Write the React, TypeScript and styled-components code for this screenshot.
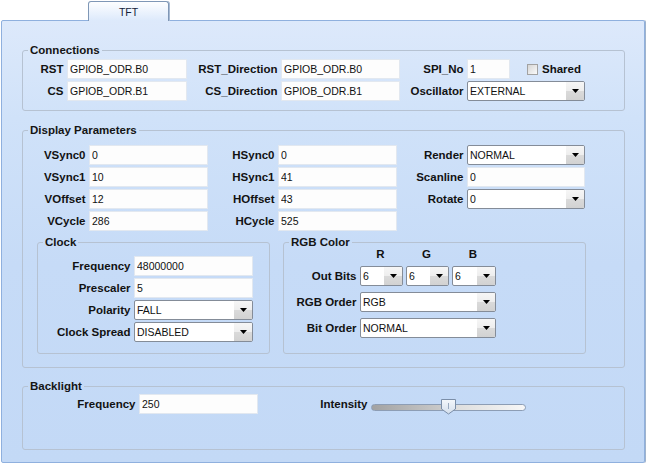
import React from 'react';
import styled, { createGlobalStyle } from 'styled-components';

const GlobalStyle = createGlobalStyle`
  html, body {
    margin: 0;
    padding: 0;
    background: #ffffff;
  }
  body {
    font-family: "Liberation Sans", Arial, sans-serif;
    font-size: 11px;
    color: #111;
  }
  * {
    box-sizing: border-box;
  }
`;

const Window = styled.div`
  width: 646px;
  height: 464px;
  padding-top: 1px;
  overflow: hidden;
`;

const TabStrip = styled.div`
  display: flex;
  height: 20px;
  padding-left: 88px;
`;

const Tab = styled.div`
  position: relative;
  z-index: 1;
  width: 81px;
  height: 20px;
  border: 1px solid #7f97b6;
  border-bottom: none;
  border-radius: 3px 3px 0 0;
  background: linear-gradient(#fdfeff, #dce9fb);
  box-shadow: 1px 0 0 #a9bbd3;
  display: flex;
  align-items: center;
  justify-content: center;
  font-size: 10.5px;
  color: #14213a;
`;

const Panel = styled.div`
  margin: -1px 0 0 1px;
  width: 644px;
  height: 443px;
  border: 1px solid #8fb0de;
  border-radius: 2px;
  box-shadow: 1px 0 0 #9fb3cc;
  background: linear-gradient(180deg, #dde9fb 0%, #d0e2f9 22%, #c6dbf7 55%, #c3d9f6 100%);
  padding: 23px 19px 0 20px;
`;

const Group = styled.fieldset<{ $top?: number; $width?: number }>`
  margin: ${p => p.$top || 0}px 0 0 0;
  padding: 0;
  min-width: 0;
  width: ${p => (p.$width ? `${p.$width}px` : 'auto')};
  border: 1px solid #b6c2d2;
  border-radius: 3px;
`;

const Legend = styled.legend`
  margin-left: 5px;
  padding: 0 2px;
  font-weight: bold;
  font-size: 11.5px;
  line-height: 13px;
  color: #151515;
`;

const FieldGrid = styled.div<{ $cols: string; $pad: string }>`
  display: grid;
  grid-template-columns: ${p => p.$cols};
  grid-auto-rows: 20px;
  row-gap: 2px;
  padding: ${p => p.$pad};
`;

const Label = styled.label`
  display: flex;
  align-items: center;
  justify-content: flex-end;
  padding-right: 3.5px;
  font-weight: bold;
  font-size: 11.5px;
  color: #121212;
  white-space: nowrap;
`;

const TextBox = styled.input`
  width: 100%;
  height: 20px;
  margin: 0;
  padding: 0 2px;
  background: #fdfdfd;
  border: 1px solid #e2e8f0;
  font-family: inherit;
  font-size: 10.5px;
  color: #111;
  outline: none;
`;

const SelectBox = styled.div<{ $span?: number }>`
  grid-column: span ${p => p.$span || 1};
  display: flex;
  align-items: stretch;
  height: 20px;
  border: 1px solid #848c98;
  border-radius: 2px;
  background: #ffffff;
  overflow: hidden;
`;

const SelectValue = styled.span`
  flex: 1;
  display: flex;
  align-items: center;
  padding-left: 2px;
  font-size: 10.5px;
  color: #111;
  white-space: nowrap;
`;

const SelectButton = styled.span`
  width: 18px;
  display: flex;
  align-items: center;
  justify-content: center;
  background: linear-gradient(#f6f6f6 0%, #eeeeee 48%, #dadada 52%, #d2d2d2 100%);
`;

const CheckCell = styled.div`
  display: flex;
  align-items: center;
  gap: 4px;
  padding-left: 17px;
  font-weight: bold;
  font-size: 11.5px;
`;

const CheckBox = styled.span`
  width: 11px;
  height: 11px;
  border: 1px solid #a2a2a2;
  background: linear-gradient(135deg, #d6d6d6, #fafafa);
`;

const SubRow = styled.div`
  display: flex;
  gap: 13px;
  padding: 5px 0 13px 14px;
`;

const RgbGrid = styled.div`
  display: grid;
  grid-template-columns: 76px 136px;
  grid-template-rows: 11px 20px 20px 20px;
  row-gap: 6px;
`;

const ChannelRow = styled.div`
  display: flex;
  gap: 3px;
`;

const ChannelHead = styled.span<{ $w: number }>`
  width: ${p => p.$w}px;
  text-align: center;
  padding-right: 2px;
  font-weight: bold;
  font-size: 11.5px;
  line-height: 11px;
`;

const ChannelSelect = styled(SelectBox)<{ $w: number }>`
  width: ${p => p.$w}px;
`;

const Track = styled.div`
  position: relative;
  align-self: start;
  margin-top: 10px;
  height: 7px;
  border: 1px solid #8d9db4;
  border-radius: 4px;
  background: linear-gradient(90deg, #a2a2a2 0%, #bcbcbc 30%, #c9c9c9 45%, #dedede 55%, #ebebeb 80%, #f7f7f7 100%);
`;

const Thumb = styled.svg`
  position: absolute;
  left: 69px;
  top: -6px;
`;

const Arrow = () => (
  <svg width="7" height="4" viewBox="0 0 7 4">
    <polygon points="0,0 7,0 3.5,4" fill="#000" />
  </svg>
);

const Select: React.FC<{ value: string; span?: number }> = ({ value, span }) => (
  <SelectBox $span={span}>
    <SelectValue>{value}</SelectValue>
    <SelectButton>
      <Arrow />
    </SelectButton>
  </SelectBox>
);

const channels = [
  { name: 'R', w: 43 },
  { name: 'G', w: 43 },
  { name: 'B', w: 44 },
];

export default function App() {
  return (
    <Window>
      <GlobalStyle />
      <TabStrip>
        <Tab>TFT</Tab>
      </TabStrip>
      <Panel>
        <Group>
          <Legend>Connections</Legend>
          <FieldGrid $cols="44px 120px 94px 119px 67px 43px 75px" $pad="2px 0 9px">
            <Label>RST</Label>
            <TextBox readOnly value="GPIOB_ODR.B0" />
            <Label>RST_Direction</Label>
            <TextBox readOnly value="GPIOB_ODR.B0" />
            <Label>SPI_No</Label>
            <TextBox readOnly value="1" />
            <CheckCell>
              <CheckBox />
              Shared
            </CheckCell>
            <Label>CS</Label>
            <TextBox readOnly value="GPIOB_ODR.B1" />
            <Label>CS_Direction</Label>
            <TextBox readOnly value="GPIOB_ODR.B1" />
            <Label>Oscillator</Label>
            <Select value="EXTERNAL" span={2} />
          </FieldGrid>
        </Group>

        <Group $top={13}>
          <Legend>Display Parameters</Legend>
          <FieldGrid $cols="66px 119px 70px 119px 70px 118px" $pad="8px 0 0">
            <Label>VSync0</Label>
            <TextBox readOnly value="0" />
            <Label>HSync0</Label>
            <TextBox readOnly value="0" />
            <Label>Render</Label>
            <Select value="NORMAL" />
            <Label>VSync1</Label>
            <TextBox readOnly value="10" />
            <Label>HSync1</Label>
            <TextBox readOnly value="41" />
            <Label>Scanline</Label>
            <TextBox readOnly value="0" />
            <Label>VOffset</Label>
            <TextBox readOnly value="12" />
            <Label>HOffset</Label>
            <TextBox readOnly value="43" />
            <Label>Rotate</Label>
            <Select value="0" />
            <Label>VCycle</Label>
            <TextBox readOnly value="286" />
            <Label>HCycle</Label>
            <TextBox readOnly value="525" />
          </FieldGrid>
          <SubRow>
            <Group $width={233}>
              <Legend>Clock</Legend>
              <FieldGrid $cols="96px 119px" $pad="7px 0 11px">
                <Label>Frequency</Label>
                <TextBox readOnly value="48000000" />
                <Label>Prescaler</Label>
                <TextBox readOnly value="5" />
                <Label>Polarity</Label>
                <Select value="FALL" />
                <Label>Clock Spread</Label>
                <Select value="DISABLED" />
              </FieldGrid>
            </Group>
            <Group $width={303}>
              <Legend>RGB Color</Legend>
              <RgbGrid>
                <span />
                <ChannelRow>
                  {channels.map(c => (
                    <ChannelHead key={c.name} $w={c.w}>
                      {c.name}
                    </ChannelHead>
                  ))}
                </ChannelRow>
                <Label>Out Bits</Label>
                <ChannelRow>
                  {channels.map(c => (
                    <ChannelSelect key={c.name} $w={c.w}>
                      <SelectValue>6</SelectValue>
                      <SelectButton>
                        <Arrow />
                      </SelectButton>
                    </ChannelSelect>
                  ))}
                </ChannelRow>
                <Label>RGB Order</Label>
                <Select value="RGB" />
                <Label>Bit Order</Label>
                <Select value="NORMAL" />
              </RgbGrid>
            </Group>
          </SubRow>
        </Group>

        <Group $top={12}>
          <Legend>Backlight</Legend>
          <FieldGrid $cols="116px 119px 113px 155px" $pad="1px 0 35px">
            <Label>Frequency</Label>
            <TextBox readOnly value="250" />
            <Label>Intensity</Label>
            <Track>
              <Thumb width="16" height="16" viewBox="0 0 16 16">
                <defs>
                  <linearGradient id="thumbFill" x1="0" y1="0" x2="0" y2="1">
                    <stop offset="0" stopColor="#f4f7fb" />
                    <stop offset="1" stopColor="#d3deec" />
                  </linearGradient>
                </defs>
                <path d="M0.5 0.5 H14.5 V10 L7.5 15 L0.5 10 Z" fill="url(#thumbFill)" stroke="#7b8ea8" />
                <line x1="7.5" y1="4" x2="7.5" y2="10" stroke="#9aaac0" />
              </Thumb>
            </Track>
          </FieldGrid>
        </Group>
      </Panel>
    </Window>
  );
}
